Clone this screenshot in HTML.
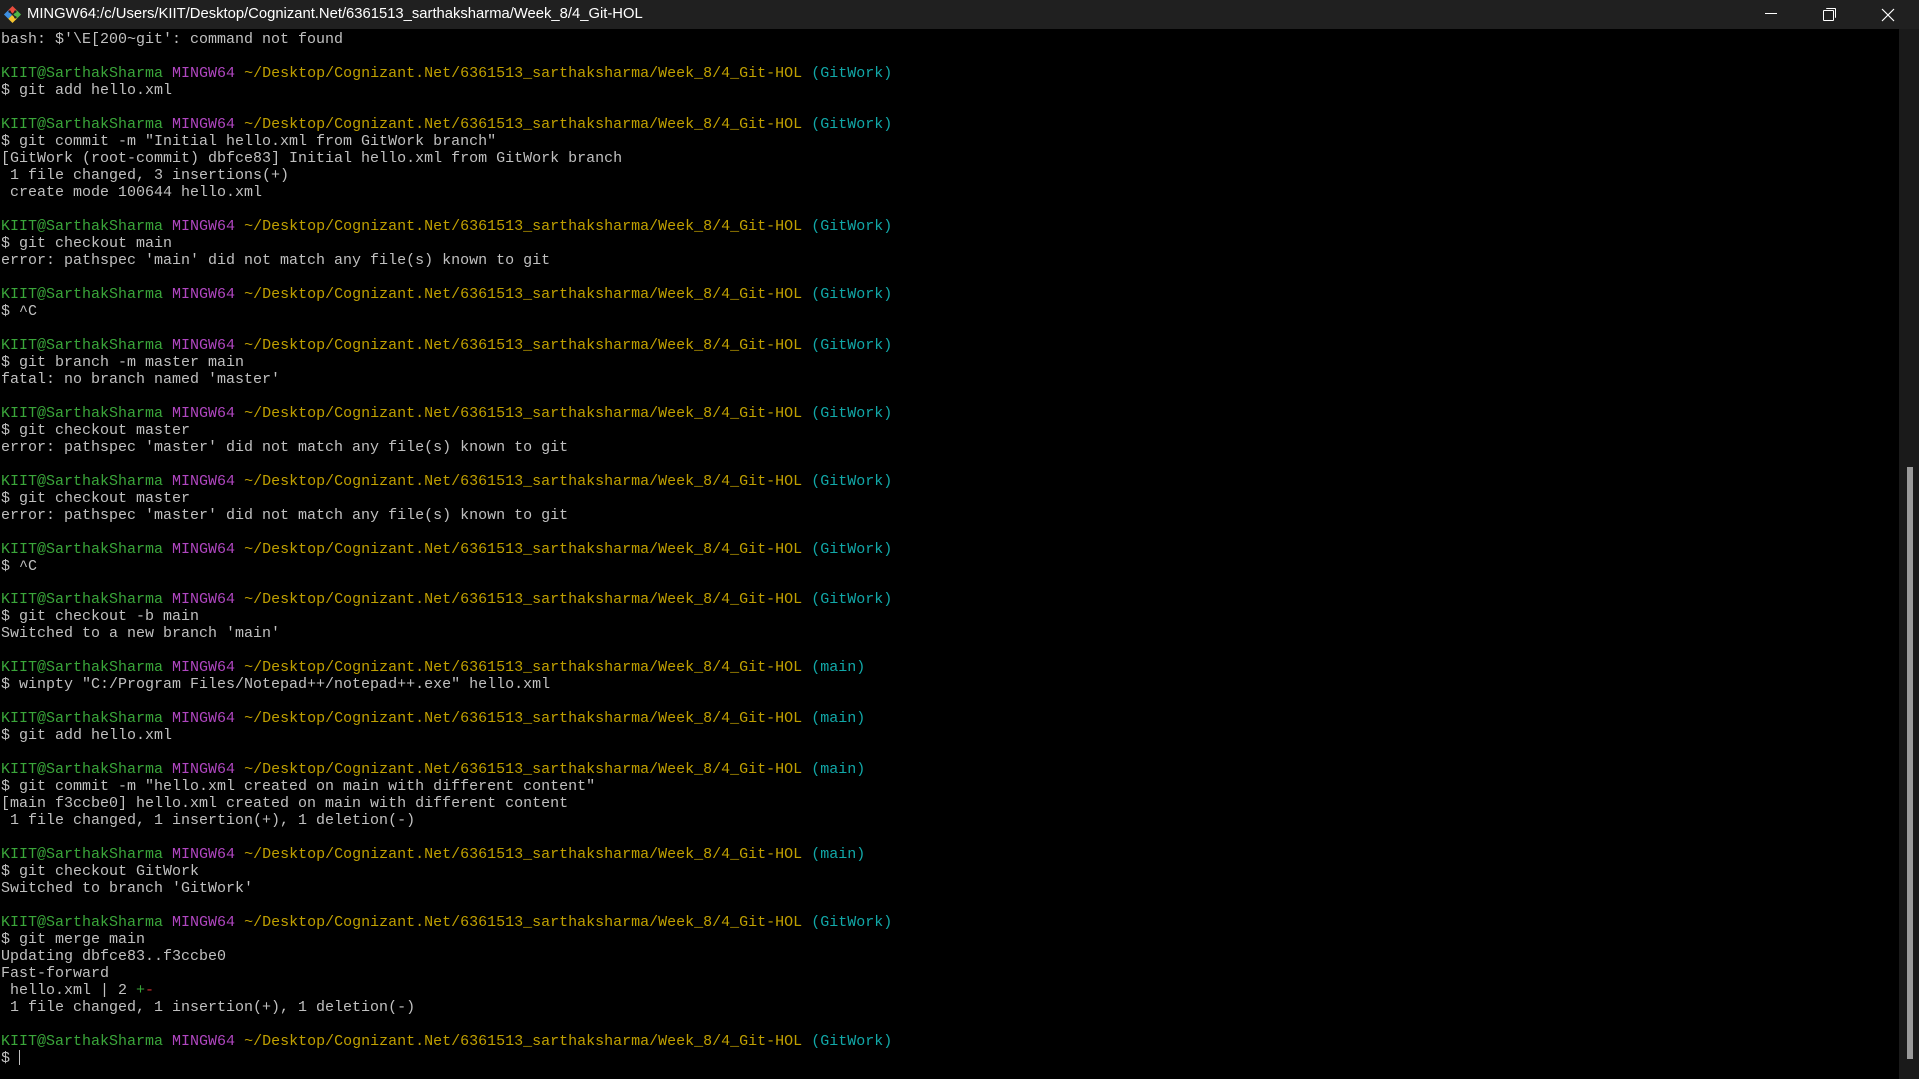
<!DOCTYPE html>
<html><head><meta charset="utf-8"><style>
html,body{margin:0;padding:0;background:#000;width:1919px;height:1079px;overflow:hidden}
#title{position:absolute;left:0;top:0;width:1919px;height:29px;background:#202020;color:#fff;font:14.8px "Liberation Sans",sans-serif;line-height:29px}
#title .t{position:absolute;left:27px;top:0}
#term{position:absolute;left:1px;top:31px;font:15px/16.98px "Liberation Mono",monospace;color:#c0c0c0;white-space:pre;margin:0}
.g{color:#3aa63a}.m{color:#b046c0}.y{color:#c0a000}.c{color:#11a8a8}.r{color:#d03030}
#sb{position:absolute;left:1899px;top:29px;width:20px;height:1050px;background:#1a1a1a}
#th{position:absolute;left:1907px;top:467px;width:6px;height:592px;background:#9a9a9a}
</style></head><body>
<div id="title">
<svg style="position:absolute;left:3px;top:5px" width="19" height="19" viewBox="0 0 20 20">
<path d="M10 1L14.5 5.5L10 10L5.5 5.5Z" fill="#e84c3d"/>
<path d="M14.5 5.5L19 10L14.5 14.5L10 10Z" fill="#4fb848"/>
<path d="M10 10L14.5 14.5L10 19L5.5 14.5Z" fill="#f4c430"/>
<path d="M5.5 5.5L10 10L5.5 14.5L1 10Z" fill="#3d8fe0"/>
<path d="M7 7L13 13M10 10L13 7" stroke="#222" stroke-width="1.4"/>
<circle cx="7" cy="7" r="1.3" fill="#222"/><circle cx="13" cy="13" r="1.3" fill="#222"/><circle cx="13" cy="7" r="1.3" fill="#222"/>
</svg>
<span class="t">MINGW64:/c/Users/KIIT/Desktop/Cognizant.Net/6361513_sarthaksharma/Week_8/4_Git-HOL</span>
<div style="position:absolute;left:1765px;top:13px;width:12px;height:1px;background:#fff"></div>
<div style="position:absolute;left:1823px;top:10px;width:9px;height:9px;border:1px solid #fff;border-radius:1px"></div>
<div style="position:absolute;left:1826px;top:8px;width:9px;height:9px;border-top:1px solid #fff;border-right:1px solid #fff;border-radius:1px"></div>
<svg style="position:absolute;left:1881px;top:8px" width="14" height="14"><path d="M1 1L13 13M13 1L1 13" stroke="#fff" stroke-width="1.2"/></svg>
</div>
<pre id="term">bash: $'\E[200~git': command not found

<span class="g">KIIT@SarthakSharma</span> <span class="m">MINGW64</span> <span class="y">~/Desktop/Cognizant.Net/6361513_sarthaksharma/Week_8/4_Git-HOL</span> <span class="c">(GitWork)</span>
$ git add hello.xml

<span class="g">KIIT@SarthakSharma</span> <span class="m">MINGW64</span> <span class="y">~/Desktop/Cognizant.Net/6361513_sarthaksharma/Week_8/4_Git-HOL</span> <span class="c">(GitWork)</span>
$ git commit -m "Initial hello.xml from GitWork branch"
[GitWork (root-commit) dbfce83] Initial hello.xml from GitWork branch
 1 file changed, 3 insertions(+)
 create mode 100644 hello.xml

<span class="g">KIIT@SarthakSharma</span> <span class="m">MINGW64</span> <span class="y">~/Desktop/Cognizant.Net/6361513_sarthaksharma/Week_8/4_Git-HOL</span> <span class="c">(GitWork)</span>
$ git checkout main
error: pathspec 'main' did not match any file(s) known to git

<span class="g">KIIT@SarthakSharma</span> <span class="m">MINGW64</span> <span class="y">~/Desktop/Cognizant.Net/6361513_sarthaksharma/Week_8/4_Git-HOL</span> <span class="c">(GitWork)</span>
$ ^C

<span class="g">KIIT@SarthakSharma</span> <span class="m">MINGW64</span> <span class="y">~/Desktop/Cognizant.Net/6361513_sarthaksharma/Week_8/4_Git-HOL</span> <span class="c">(GitWork)</span>
$ git branch -m master main
fatal: no branch named 'master'

<span class="g">KIIT@SarthakSharma</span> <span class="m">MINGW64</span> <span class="y">~/Desktop/Cognizant.Net/6361513_sarthaksharma/Week_8/4_Git-HOL</span> <span class="c">(GitWork)</span>
$ git checkout master
error: pathspec 'master' did not match any file(s) known to git

<span class="g">KIIT@SarthakSharma</span> <span class="m">MINGW64</span> <span class="y">~/Desktop/Cognizant.Net/6361513_sarthaksharma/Week_8/4_Git-HOL</span> <span class="c">(GitWork)</span>
$ git checkout master
error: pathspec 'master' did not match any file(s) known to git

<span class="g">KIIT@SarthakSharma</span> <span class="m">MINGW64</span> <span class="y">~/Desktop/Cognizant.Net/6361513_sarthaksharma/Week_8/4_Git-HOL</span> <span class="c">(GitWork)</span>
$ ^C

<span class="g">KIIT@SarthakSharma</span> <span class="m">MINGW64</span> <span class="y">~/Desktop/Cognizant.Net/6361513_sarthaksharma/Week_8/4_Git-HOL</span> <span class="c">(GitWork)</span>
$ git checkout -b main
Switched to a new branch 'main'

<span class="g">KIIT@SarthakSharma</span> <span class="m">MINGW64</span> <span class="y">~/Desktop/Cognizant.Net/6361513_sarthaksharma/Week_8/4_Git-HOL</span> <span class="c">(main)</span>
$ winpty "C:/Program Files/Notepad++/notepad++.exe" hello.xml

<span class="g">KIIT@SarthakSharma</span> <span class="m">MINGW64</span> <span class="y">~/Desktop/Cognizant.Net/6361513_sarthaksharma/Week_8/4_Git-HOL</span> <span class="c">(main)</span>
$ git add hello.xml

<span class="g">KIIT@SarthakSharma</span> <span class="m">MINGW64</span> <span class="y">~/Desktop/Cognizant.Net/6361513_sarthaksharma/Week_8/4_Git-HOL</span> <span class="c">(main)</span>
$ git commit -m "hello.xml created on main with different content"
[main f3ccbe0] hello.xml created on main with different content
 1 file changed, 1 insertion(+), 1 deletion(-)

<span class="g">KIIT@SarthakSharma</span> <span class="m">MINGW64</span> <span class="y">~/Desktop/Cognizant.Net/6361513_sarthaksharma/Week_8/4_Git-HOL</span> <span class="c">(main)</span>
$ git checkout GitWork
Switched to branch 'GitWork'

<span class="g">KIIT@SarthakSharma</span> <span class="m">MINGW64</span> <span class="y">~/Desktop/Cognizant.Net/6361513_sarthaksharma/Week_8/4_Git-HOL</span> <span class="c">(GitWork)</span>
$ git merge main
Updating dbfce83..f3ccbe0
Fast-forward
 hello.xml | 2 <span class="g">+</span><span class="r">-</span>
 1 file changed, 1 insertion(+), 1 deletion(-)

<span class="g">KIIT@SarthakSharma</span> <span class="m">MINGW64</span> <span class="y">~/Desktop/Cognizant.Net/6361513_sarthaksharma/Week_8/4_Git-HOL</span> <span class="c">(GitWork)</span>
$ <span style="display:inline-block;width:1px;height:15px;background:#c0c0c0;vertical-align:-3px"></span></pre>
<div id="sb"></div><div id="th"></div>
</body></html>
